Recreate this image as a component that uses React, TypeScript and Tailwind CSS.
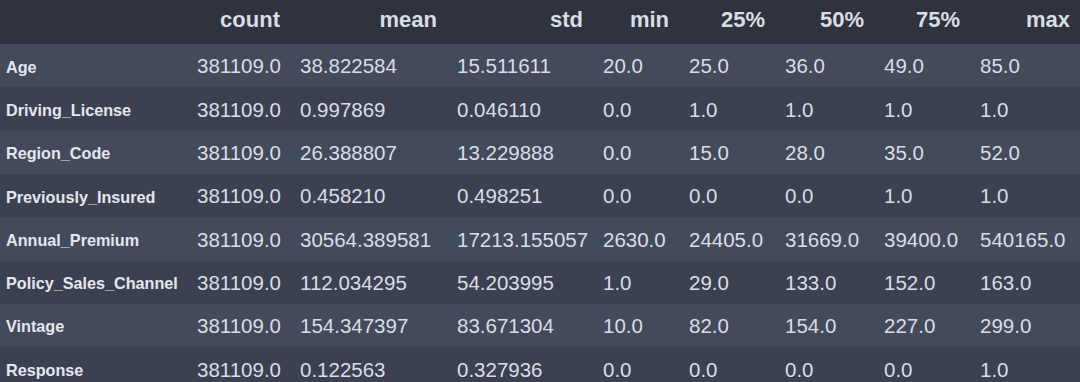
const columns = ["count", "mean", "std", "min", "25%", "50%", "75%", "max"];

const rows: [string, string[]][] = [
  ["Age", ["381109.0", "38.822584", "15.511611", "20.0", "25.0", "36.0", "49.0", "85.0"]],
  ["Driving_License", ["381109.0", "0.997869", "0.046110", "0.0", "1.0", "1.0", "1.0", "1.0"]],
  ["Region_Code", ["381109.0", "26.388807", "13.229888", "0.0", "15.0", "28.0", "35.0", "52.0"]],
  ["Previously_Insured", ["381109.0", "0.458210", "0.498251", "0.0", "0.0", "0.0", "1.0", "1.0"]],
  ["Annual_Premium", ["381109.0", "30564.389581", "17213.155057", "2630.0", "24405.0", "31669.0", "39400.0", "540165.0"]],
  ["Policy_Sales_Channel", ["381109.0", "112.034295", "54.203995", "1.0", "29.0", "133.0", "152.0", "163.0"]],
  ["Vintage", ["381109.0", "154.347397", "83.671304", "10.0", "82.0", "154.0", "227.0", "299.0"]],
  ["Response", ["381109.0", "0.122563", "0.327936", "0.0", "0.0", "0.0", "0.0", "1.0"]],
];

const grid =
  "grid grid-cols-[187px_103px_157px_146px_86px_96px_99px_96px_110px]";

export default function App() {
  return (
    <div className="w-[1080px] h-[382px] overflow-hidden bg-[#3b4150] font-['Liberation_Sans',Arial,sans-serif]">
      <div className={`${grid} h-[44px] items-center pb-[5px] bg-[#2e333e] text-[22px] font-bold text-[#d9dde6]`}>
        <div />
        {columns.map((c) => (
          <div key={c} className="text-right pr-2.5 whitespace-nowrap">
            {c}
          </div>
        ))}
      </div>
      {rows.map(([name, values], i) => (
        <div
          key={name}
          className={`${grid} h-[43.33px] items-center ${
            i % 2 === 0 ? "bg-[#434a5b]" : "bg-[#3b4150]"
          }`}
        >
          <div className="pl-1.5 pt-[2px] text-[16.2px] font-bold text-[#e4e7ee] whitespace-nowrap">
            {name}
          </div>
          {values.map((v, j) => (
            <div key={j} className="pl-2.5 pt-[2px] text-[20.5px] text-[#d9dde6] whitespace-nowrap">
              {v}
            </div>
          ))}
        </div>
      ))}
    </div>
  );
}
